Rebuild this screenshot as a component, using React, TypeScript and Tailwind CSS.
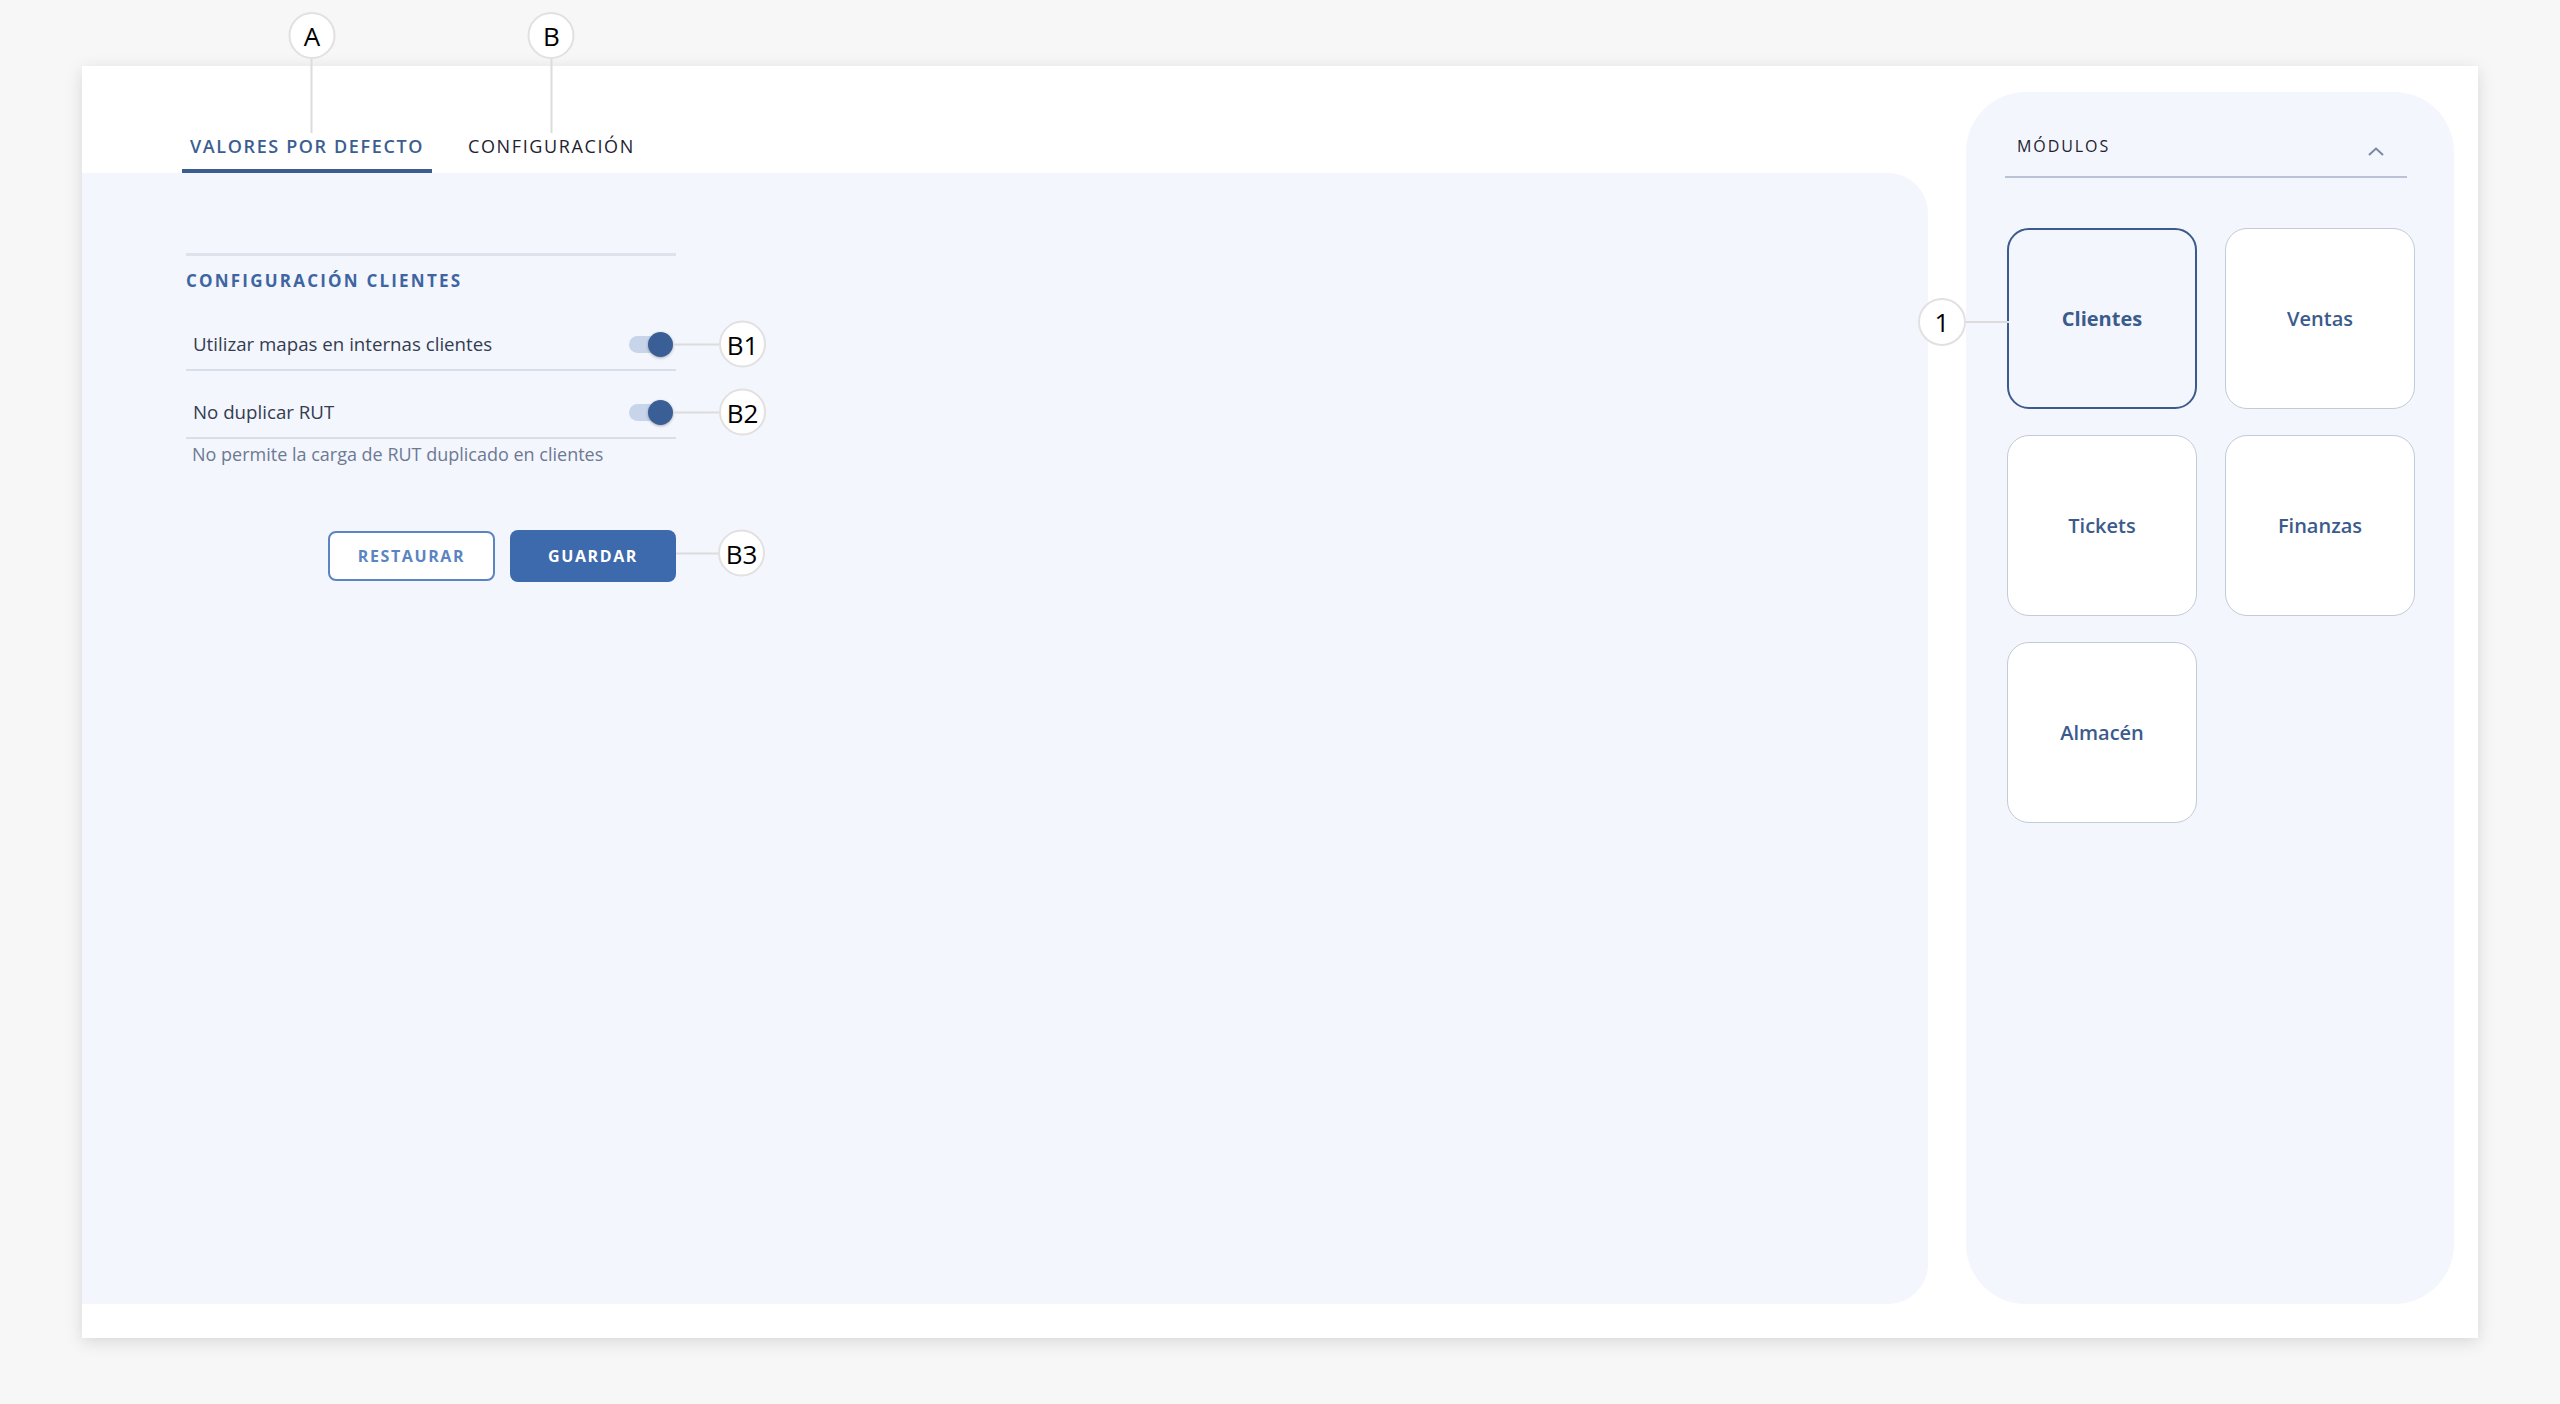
import type { ReactNode } from "react";

// round callout bubble used by the spec markers
function Marker({ label, size = 47 }: { label: string; size?: number }) {
  return (
    <div
      className={`flex shrink-0 items-center justify-center rounded-full border-2 border-[#e2e0e0] bg-white text-[26px] font-normal leading-none tracking-normal text-black ${
        size === 48 ? "h-[48px] w-[48px]" : "h-[47px] w-[47px]"
      }`}
    >
      {label}
    </div>
  );
}

function Line({ vertical, length }: { vertical?: boolean; length: string }) {
  return <div className={`${vertical ? `w-[2px] ${length}` : `h-[2px] ${length}`} shrink-0 bg-[#dcdcdc]`} />;
}

function Tab({ label, active, marker, shift }: { label: string; active?: boolean; marker: string; shift?: string }) {
  return (
    <button
      className={`relative border-b-4 px-2 pb-[11px] text-[18px] leading-6 tracking-[0.09em] ${
        active ? "border-[#3b5e92] font-semibold text-[#3b5e92]" : "border-transparent font-normal text-[#1f2230]"
      }`}
    >
      {label}
      <div className={`absolute bottom-[36px] flex -translate-x-1/2 flex-col items-center ${shift ?? "left-1/2"}`}>
        <Marker label={marker} />
        <Line vertical length="h-[74px]" />
      </div>
    </button>
  );
}

function Toggle({ marker }: { marker: string }) {
  return (
    <div className="relative h-[25px] w-[44px]">
      <div className="absolute left-0 top-[4px] h-[17px] w-[41px] rounded-full bg-[#c7d4ea]" />
      <div className="absolute right-0 top-0 h-[25px] w-[25px] rounded-full bg-[#3a5f96] shadow-[0_1px_3px_rgba(0,0,0,0.3)]" />
      <div className="absolute left-full top-1/2 flex -translate-y-1/2 items-center">
        <Line length="w-[46px]" />
        <Marker label={marker} />
      </div>
    </div>
  );
}

function SettingRow({ label, marker, first }: { label: string; marker: string; first?: boolean }) {
  return (
    <div className={`border-b-2 border-[#d8dfea] ${first ? "pt-[26px]" : "pt-[16px]"}`}>
      <div className="flex h-[50px] items-center justify-between pl-[7px] pr-[3px]">
        <span className="text-[18.7px] leading-[26px] text-[#343c50]">{label}</span>
        <Toggle marker={marker} />
      </div>
    </div>
  );
}

function ModuleCard({ children, selected }: { children: ReactNode; selected?: boolean }) {
  return (
    <button
      className={`relative flex h-[181px] items-center justify-center rounded-[22px] text-[20px] text-[#3b5b8c] ${
        selected ? "border-2 border-[#3c5a8b] font-bold" : "border border-[#c3cad8] bg-white font-semibold"
      }`}
    >
      {children}
      {selected && (
        <div className="absolute right-full top-1/2 flex -translate-y-[calc(50%-3px)] items-center">
          <Marker label="1" size={48} />
          <Line length="w-[43px]" />
        </div>
      )}
    </button>
  );
}

export default function App() {
  const modules = ["Clientes", "Ventas", "Tickets", "Finanzas", "Almacén"];

  return (
    <div className="flex h-screen bg-[#f7f7f7] px-[82px] py-[66px] font-['Open_Sans',sans-serif]">
      <div className="flex flex-1 bg-white pb-[34px] pr-[24px] shadow-[0_4px_16px_rgba(0,0,0,0.13)]">
        {/* tabs + settings */}
        <div className="flex flex-1 flex-col">
          <div className="flex gap-[28px] pl-[100px] pt-[68px]">
            <Tab label="VALORES POR DEFECTO" active marker="A" shift="left-[calc(50%+5px)]" />
            <Tab label="CONFIGURACIÓN" marker="B" />
          </div>

          <div className="flex-1 rounded-r-[40px] bg-[#f3f6fd] pl-[104px] pt-[80px]">
            <div className="w-[490px]">
              <div className="h-[3px] bg-[#dde2ec]" />
              <h2 className="mt-[13px] text-[17px] font-bold leading-6 tracking-[0.13em] text-[#3e65a1]">
                CONFIGURACIÓN CLIENTES
              </h2>

              <SettingRow first label="Utilizar mapas en internas clientes" marker="B1" />
              <SettingRow label="No duplicar RUT" marker="B2" />
              <p className="mt-[3px] pl-[6px] text-[18px] leading-6 text-[#6d7993]">
                No permite la carga de RUT duplicado en clientes
              </p>

              <div className="mt-[64px] flex items-center justify-end gap-[15px]">
                <button className="h-[50px] w-[167px] rounded-[8px] border-2 border-[#5b84c2] bg-white text-[16px] font-bold tracking-[0.1em] text-[#5b84c2]">
                  RESTAURAR
                </button>
                <button className="relative h-[52px] w-[166px] rounded-[8px] bg-[#3d69ad] text-[16px] font-bold tracking-[0.1em] text-white">
                  GUARDAR
                  <div className="absolute left-full top-1/2 flex -translate-y-[calc(50%+3px)] items-center">
                    <Line length="w-[42px]" />
                    <Marker label="B3" />
                  </div>
                </button>
              </div>
            </div>
          </div>
        </div>

        {/* modules sidebar */}
        <aside className="ml-[38px] mt-[26px] w-[488px] rounded-[60px] bg-[#f3f6fd] pl-[39px] pr-[38px] pt-[44px]">
          <div className="mr-[9px] flex items-center justify-between border-b-2 border-[#b9c3d4] pb-[20px] pl-[12px] pr-[23px]">
            <span className="text-[16px] leading-5 tracking-[0.12em] text-[#1f2230]">MÓDULOS</span>
            <svg className="mt-[10px]" width="16" height="9" viewBox="0 0 16 9" fill="none">
              <path d="M1 8 L8 1.5 L15 8" stroke="#7c889e" strokeWidth="2" />
            </svg>
          </div>

          <div className="mt-[50px] grid grid-cols-[190px_190px] gap-x-[28px] gap-y-[26px] pl-[2px]">
            {modules.map((m, i) => (
              <ModuleCard key={m} selected={i === 0}>
                {m}
              </ModuleCard>
            ))}
          </div>
        </aside>
      </div>
    </div>
  );
}
